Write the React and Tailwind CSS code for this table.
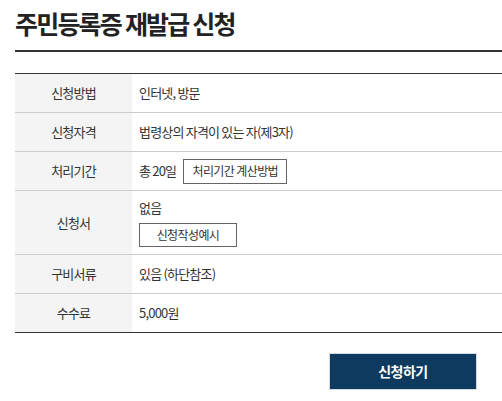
const font = { fontFamily: '"Noto Sans CJK KR", "Noto Sans", sans-serif' }

const rows = [
    { label: '신청방법', content: <span>인터넷, 방문</span> },
    { label: '신청자격', content: <span>법령상의 자격이 있는 자(제3자)</span> },
    {
        label: '처리기간',
        content: (
            <div className="flex items-center gap-[7px]">
                <span>총 20일</span>
                <button className="h-[25px] w-[104px] border border-[#666] text-[12px] text-[#333] bg-white tracking-[-0.6px]">
                    처리기간 계산방법
                </button>
            </div>
        ),
    },
    {
        label: '신청서',
        tall: true,
        content: (
            <div className="flex flex-col items-start gap-[6px]">
                <span>없음</span>
                <button className="h-[24px] w-[98px] border border-[#666] text-[12px] text-[#333] bg-white tracking-[-0.6px]">
                    신청작성예시
                </button>
            </div>
        ),
    },
    { label: '구비서류', content: <span>있음 (하단참조)</span> },
    { label: '수수료', content: <span>5,000원</span> },
]

export default function App() {
    return (
        <div className="w-[502px] h-[401px] bg-white pl-[15px] text-[#333]" style={font}>
            <div className="h-[52px] pt-[5px] border-b-2 border-[#333]">
                <h1 className="text-[25px] leading-[36px] font-bold text-[#222] tracking-[-1.8px]">주민등록증 재발급 신청</h1>
            </div>

            <div className="mt-[21px] border-t border-[#333]">
                {rows.map((row, i) => (
                    <div
                        key={row.label}
                        className={`flex ${row.tall ? 'h-[64px]' : 'h-[39px]'} border-b ${i === rows.length - 1 ? 'border-[#333]' : 'border-[#ccc]'}`}
                    >
                        <div className="w-[117px] shrink-0 bg-[#f4f4f4] flex items-center justify-center text-[13px] tracking-[-0.8px]">
                            {row.label}
                        </div>
                        <div className="flex-1 flex items-center pl-[7px] text-[13px] tracking-[-0.8px]">
                            {row.content}
                        </div>
                    </div>
                ))}
            </div>

            <div className="flex justify-end pr-[25px] mt-[20px]">
                <button className="w-[148px] h-[37px] bg-[#0d3a5e] border border-[#d5dbe3] text-white text-[14px] font-bold tracking-[-0.5px]">
                    신청하기
                </button>
            </div>
        </div>
    )
}
